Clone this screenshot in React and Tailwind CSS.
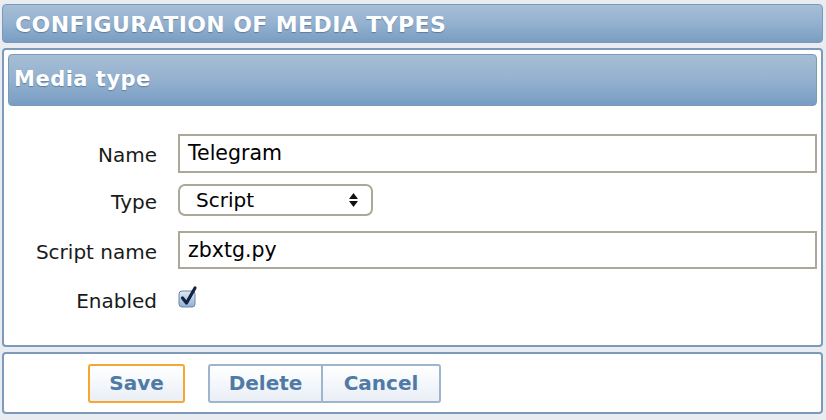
import React from 'react';

const headerBg = 'bg-gradient-to-b from-[#a6bed6] via-[#94b1cf] to-[#789dc2]';

const Checkbox = () => (
  <svg width="21" height="24" viewBox="0 0 21 24">
    <defs>
      <linearGradient id="cb" x1="0" y1="0" x2="0" y2="1">
        <stop offset="0" stopColor="#dfe9f5" />
        <stop offset="1" stopColor="#8fb0d8" />
      </linearGradient>
    </defs>
    <rect x="1" y="6" width="16" height="16" rx="3" fill="url(#cb)" stroke="#6e86a3" strokeWidth="1" />
    <path d="M4.5 13 L8.5 18 L17 3" fill="none" stroke="#14233e" strokeWidth="3.2" strokeLinecap="round" strokeLinejoin="round" />
  </svg>
);

const SelectArrows = () => (
  <svg width="11" height="16" viewBox="0 0 11 16">
    <path d="M5.5 1 L10 7 H1 Z" fill="#111" />
    <path d="M5.5 15 L10 9 H1 Z" fill="#111" />
  </svg>
);

const FormRow = ({ label, children, className }) => (
  <div className={`flex items-center ${className}`}>
    <div className="w-[149px] pt-[3px] text-right text-[20px] text-[#1a1a1a]">{label}</div>
    <div className="flex-1 pl-[21px]">{children}</div>
  </div>
);

export default function App() {
  return (
    <div className="w-[826px] h-[420px] bg-[#e9edf1] pt-[4px] pl-[2px] pr-[3px] font-['DejaVu_Sans',Verdana,sans-serif]">
      {/* Page title */}
      <div className={`h-[39px] rounded-[4px] border border-[#7b9aba] ${headerBg} flex items-center pl-[12px]`}>
        <h1 className="text-white font-bold text-[22px] leading-none pt-[2px] tracking-[0.4px] [text-shadow:0_1px_1px_rgba(40,70,110,0.45)]">
          CONFIGURATION OF MEDIA TYPES
        </h1>
      </div>

      {/* Form panel */}
      <div className="mt-[5px] h-[299px] rounded-[4px] border-2 border-[#7e9aba] bg-white p-[4px]">
        <div className={`h-[52px] rounded-[4px] border border-[#7b9aba] ${headerBg} flex items-center pl-[5px]`}>
          <h2 className="text-white font-bold text-[21px] tracking-[0.5px] [text-shadow:0_1px_1px_rgba(40,70,110,0.45)]">
            Media type
          </h2>
        </div>

        <FormRow label="Name" className="mt-[28px] h-[39px]">
          <div className="h-[39px] border-2 border-[#aca898] flex items-center px-[8px] text-[20.5px] text-black">
            Telegram
          </div>
        </FormRow>

        <FormRow label="Type" className="mt-[11px] h-[32px]">
          <div className="w-[195px] h-[32px] rounded-[7px] border-2 border-[#aca898] flex items-center justify-between pl-[16px] pr-[12px] text-[20px] text-black">
            <span>Script</span>
            <SelectArrows />
          </div>
        </FormRow>

        <FormRow label="Script name" className="mt-[15px] h-[38px]">
          <div className="h-[38px] border-2 border-[#aca898] flex items-center px-[8px] text-[20.5px] text-black">
            zbxtg.py
          </div>
        </FormRow>

        <FormRow label="Enabled" className="mt-[14px] h-[32px]">
          <div className="-mt-[4px]">
            <Checkbox />
          </div>
        </FormRow>
      </div>

      {/* Buttons */}
      <div className="mt-[5px] h-[62px] rounded-[4px] border-2 border-[#7e9aba] bg-white flex items-center pl-[84px]">
        <button className="w-[97px] h-[39px] rounded-[3px] border-2 border-[#f5a733] bg-gradient-to-b from-white to-[#e9eff6] text-[#4f7aa6] font-bold text-[20px]">
          Save
        </button>
        <div className="ml-[23px] flex h-[39px] rounded-[3px] border-2 border-[#9fb4cd] bg-gradient-to-b from-white to-[#e9eff6]">
          <button className="w-[113px] border-r-2 border-[#9fb4cd] text-[#4f7aa6] font-bold text-[20px]">Delete</button>
          <button className="w-[116px] text-[#4f7aa6] font-bold text-[20px]">Cancel</button>
        </div>
      </div>
    </div>
  );
}
